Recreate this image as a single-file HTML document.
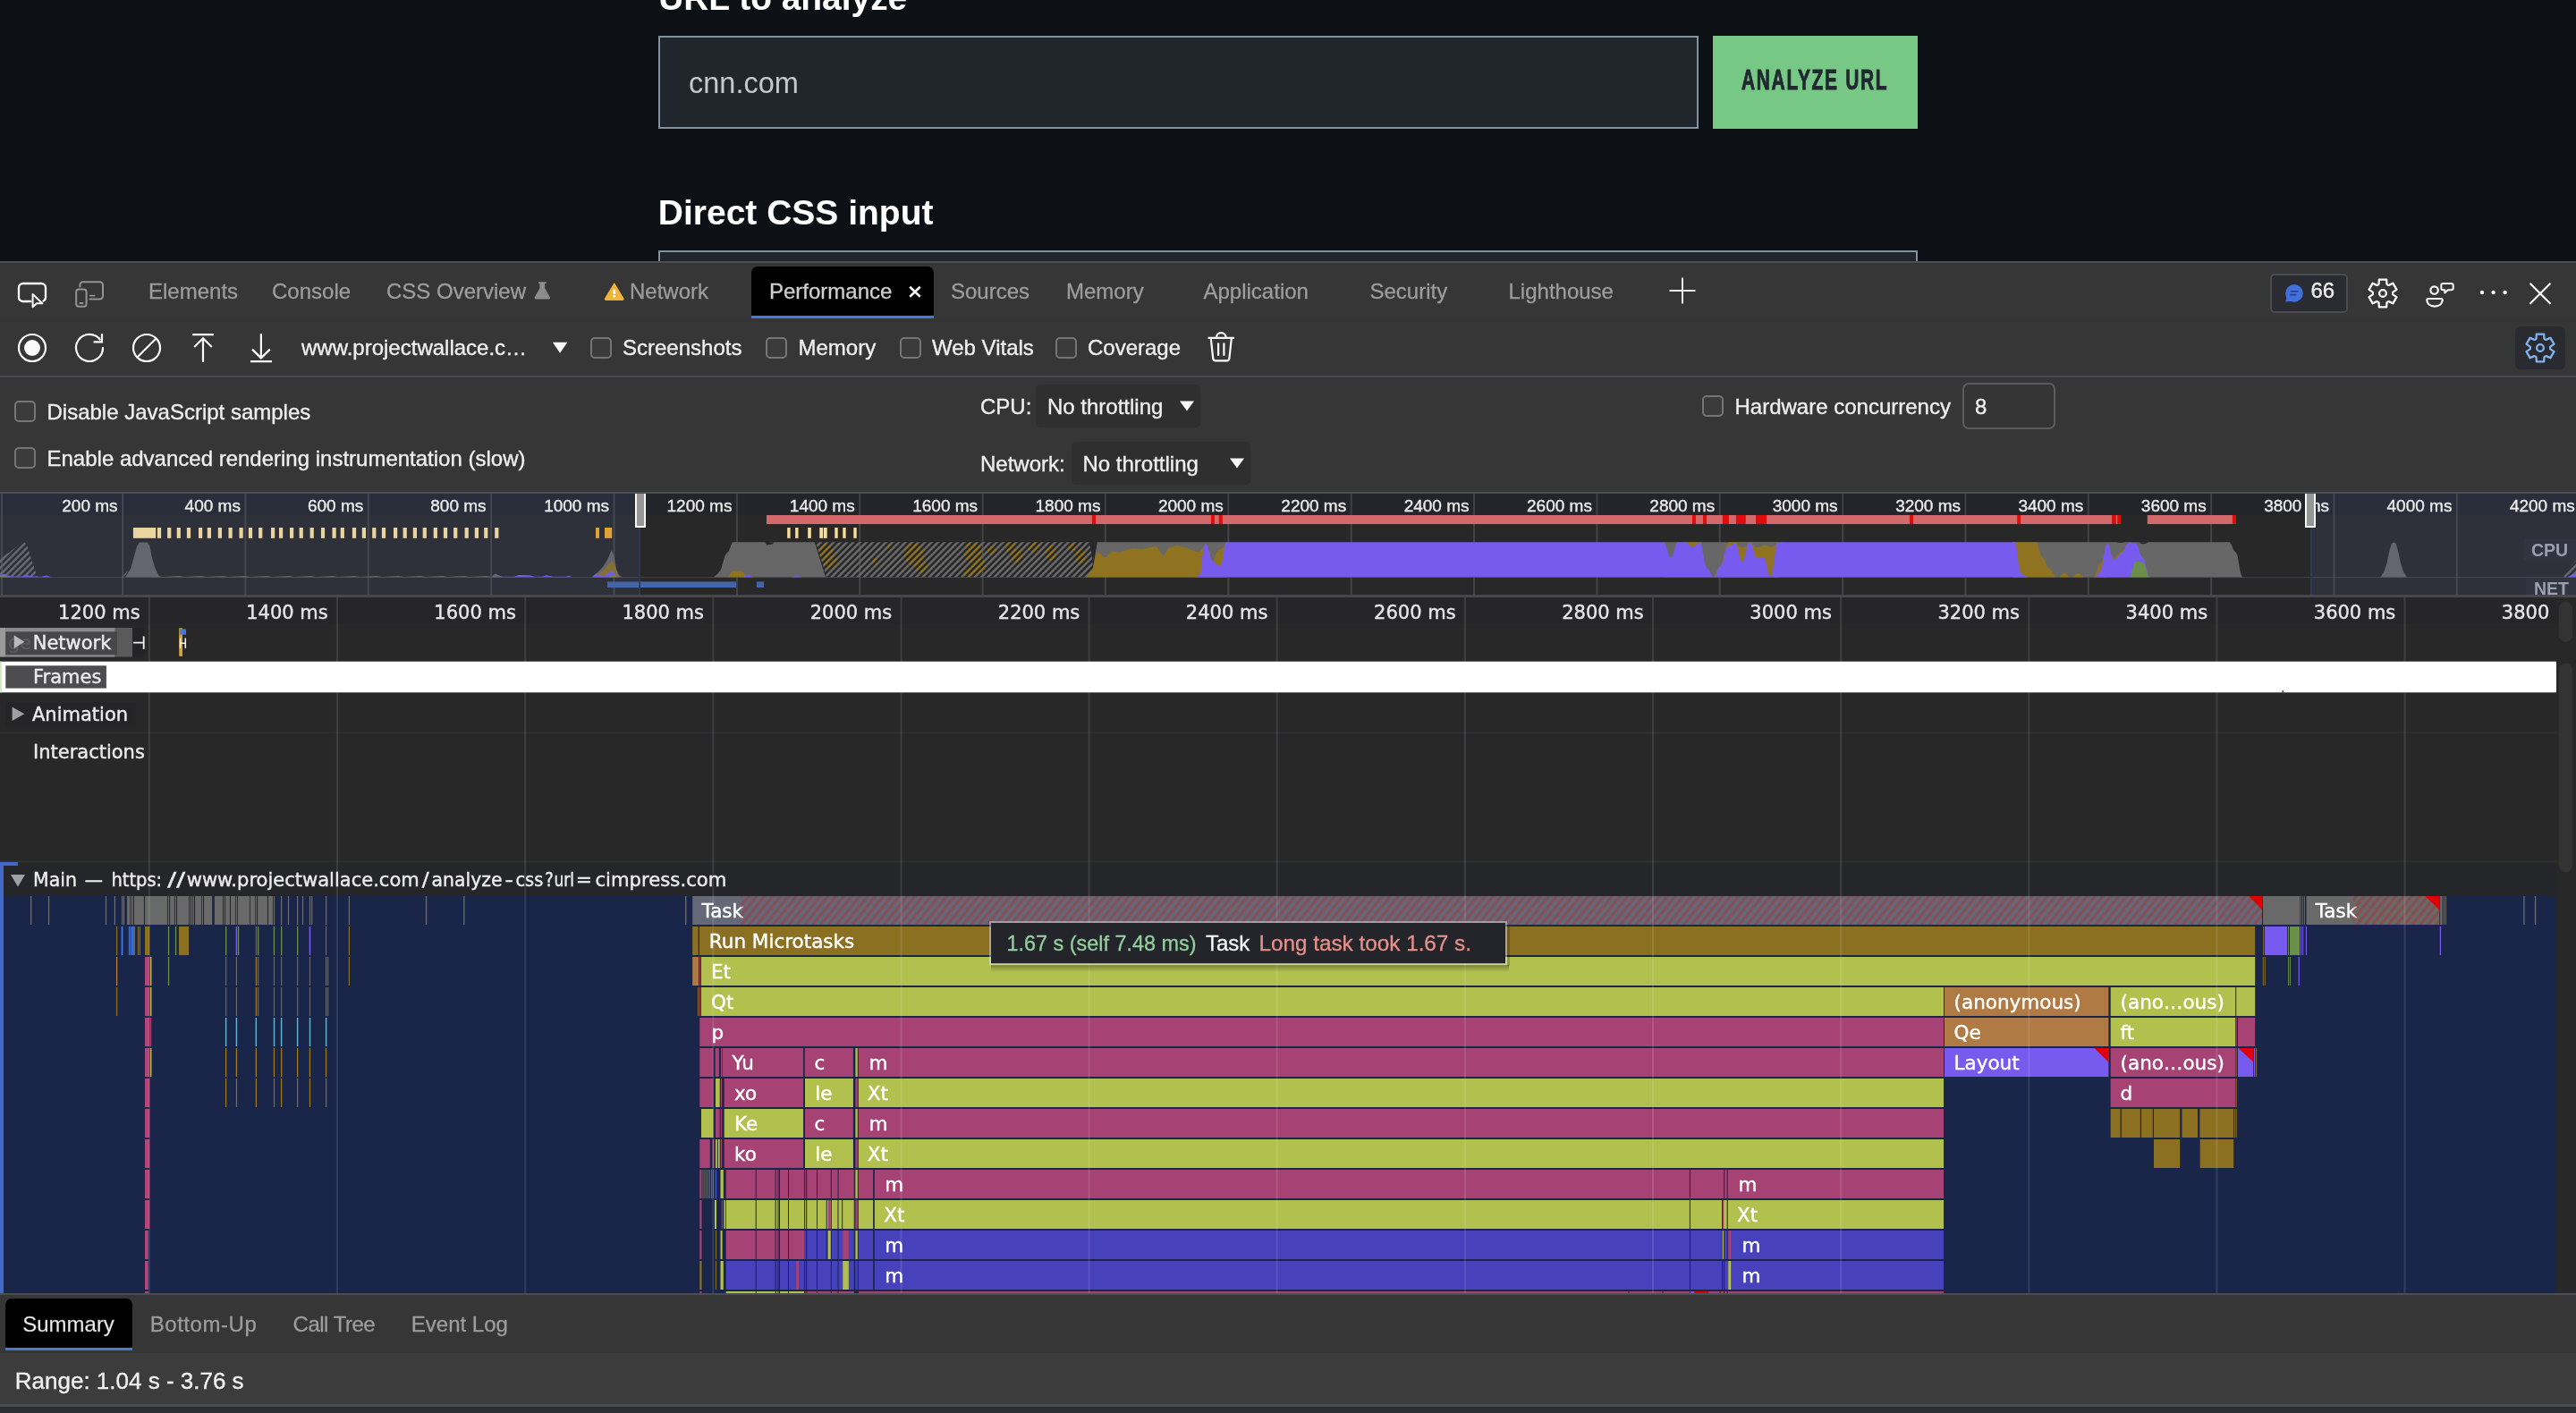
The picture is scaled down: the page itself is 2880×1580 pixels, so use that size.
<!DOCTYPE html><html><head><meta charset="utf-8"><title>DevTools Performance</title><style>
*{box-sizing:border-box;margin:0;padding:0}
html,body{width:2880px;height:1580px;overflow:hidden;background:#0d1116}
body{position:relative;will-change:transform;font-family:"Liberation Sans",sans-serif;color:#fff}
.a{position:absolute}
.t{position:absolute;white-space:nowrap;line-height:1}
.ui{font-size:24px;color:#efefef;-webkit-text-stroke:0.35px #efefef}
.tab{font-size:24px;color:#9d9d9d;-webkit-text-stroke:0.3px #9d9d9d}
.cb{position:absolute;width:24px;height:23.5px;border:2px solid #757575;border-radius:5px;background:#3b3b3b}
svg{position:absolute;overflow:visible}
.fl{font-family:"DejaVu Sans",sans-serif;font-size:21px;color:#fff;fill:currentColor;stroke:currentColor;stroke-width:.4px;paint-order:stroke}
.flb{font-size:21.5px}
</style></head><body>
<div class="a" style="left:0;top:0;width:2880px;height:292px;background:#0d1116;overflow:hidden">
<div class="t " style="left:736.2px;top:-21.5px;font-size:38.9px;font-weight:bold;color:#fff">URL to analyze</div>
<div class="a" style="left:736px;top:40px;width:1163px;height:104px;background:#21262d;border:2px solid #8291a0"></div>
<div class="t " style="left:770px;top:76.5px;font-size:32.5px;color:#c5c9cd">cnn.com</div>
<div class="a" style="left:1915px;top:40px;width:229px;height:104px;background:#77c885"></div>
<div class="t" style="left:1947px;top:74px;font-size:31px;font-weight:bold;color:#212830;-webkit-text-stroke:0.9px #212830;letter-spacing:2.5px;transform-origin:0 0;transform:scaleX(0.675)">ANALYZE URL</div>
<div class="t " style="left:735.8px;top:218.4px;font-size:39px;font-weight:bold;color:#fff">Direct CSS input</div>
<div class="a" style="left:736px;top:280px;width:1408px;height:40px;background:#21262d;border:2px solid #8291a0"></div>
</div>
<div class="a" style="left:0px;top:292px;width:2880px;height:1288px;background:#363636;"></div>
<div class="a" style="left:0px;top:292px;width:2880px;height:2px;background:#4d4e53;"></div>
<div class="a" style="left:0px;top:294px;width:2880px;height:64px;background:#363636;"></div>
<div class="a" style="left:0px;top:358px;width:2880px;height:2px;background:#333333;"></div>
<div class="a" style="left:0px;top:360px;width:2880px;height:60px;background:#363636;"></div>
<div class="a" style="left:0px;top:420px;width:2880px;height:2px;background:#494a50;"></div>
<div class="a" style="left:0px;top:422px;width:2880px;height:129px;background:#363636;"></div>
<div class="a" style="left:1158px;top:430px;width:184px;height:48px;background:#2f2f30;border-radius:5px"></div>
<div class="a" style="left:1198px;top:494px;width:200px;height:48px;background:#2f2f30;border-radius:5px"></div>
<div class="t tab" style="left:166px;top:314.0px;font-size:24px;">Elements</div>
<div class="t tab" style="left:304px;top:314.0px;font-size:24px;">Console</div>
<div class="t tab" style="left:432px;top:314.0px;font-size:24px;">CSS Overview</div>
<div class="t tab" style="left:704px;top:314.0px;font-size:24px;">Network</div>
<div class="a" style="left:840px;top:298px;width:204px;height:57.6px;background:#000;border-radius:7px 7px 0 0;border-bottom:3px solid #4a78d6"></div>
<div class="t tab" style="left:860px;top:314.0px;font-size:24px;color:#cfcfcf;-webkit-text-stroke:0.3px #cfcfcf">Performance</div>
<div class="t tab" style="left:1063px;top:314.0px;font-size:24px;">Sources</div>
<div class="t tab" style="left:1192px;top:314.0px;font-size:24px;">Memory</div>
<div class="t tab" style="left:1345.5px;top:314.0px;font-size:24px;">Application</div>
<div class="t tab" style="left:1531.5px;top:314.0px;font-size:24px;">Security</div>
<div class="t tab" style="left:1686.5px;top:314.0px;font-size:24px;">Lighthouse</div>
<div class="a" style="left:2538px;top:306px;width:87px;height:44px;background:#2b2c31;border:2px solid #4c4c50;border-radius:5px"></div>
<div class="t ui" style="left:2583.5px;top:312.9px;font-size:24px;color:#ececec">66</div>
<svg class="a" style="left:0;top:0" width="2880" height="460" viewBox="0 0 2880 460">
<path d="M34.5,337 H25.500 a4.500,4.500 0 0 1 -4.500,-4.500 V321.500 a4.500,4.500 0 0 1 4.500,-4.500 H46.500 a4.500,4.500 0 0 1 4.500,4.500 V332.500 a4.500,4.500 0 0 1 -2.500,4" fill="none" stroke="#fafafa" stroke-width="2.3" stroke-linecap="round"/>
<path d="M36.6,329 V343.300 L41,339.300 H47.300 Z" fill="#363636" stroke="#fafafa" stroke-width="2" stroke-linejoin="round"/>
<path d="M89.4,320.500 V318.800 a3.500,3.500 0 0 1 3.500,-3.500 H111.500 a3.500,3.500 0 0 1 3.500,3.500 V331 a3.500,3.500 0 0 1 -3.500,3.500 H100.500" fill="none" stroke="#949494" stroke-width="2" stroke-linecap="round"/>
<rect x="85.2" y="323.5" width="11.400" height="19.300" rx="3" fill="#363636" stroke="#949494" stroke-width="2"/>
<path d="M89.3,339 H92.600 M100.800,330.600 H105.600" stroke="#949494" stroke-width="1.8" stroke-linecap="round"/>
<path d="M602,315.300 h8.600 v1.800 h-1.400 v5.200 l5.600,9.900 a1.500,1.500 0 0 1 -1.300,2.300 h-14.400 a1.500,1.500 0 0 1 -1.300,-2.300 l5.600,-9.900 v-5.200 h-1.400 z" fill="#8c8c8c"/>
<path d="M686.8,317.3 L696.7,334 a.8,.8 0 0 1 -.7,1.2 H677.5 a.8,.8 0 0 1 -.7,-1.2 Z" fill="#f0b43c" stroke="#f0b43c" stroke-width="1.6" stroke-linejoin="round"/>
<rect x="685.5" y="323.8" width="2.700" height="5" fill="#fff"/><rect x="685.5" y="330" width="2.700" height="2.400" fill="#fff"/>
<path d="M1017.2,320.800 L1028.700,331.800 M1028.700,320.800 L1017.200,331.800" stroke="#f4f4f4" stroke-width="2.6"/>
<path d="M1866.5,325 H1895.5 M1881,310.5 V339.5" stroke="#f0f0f0" stroke-width="2"/>
<circle cx="2565" cy="327.900" r="9.800" fill="#4070dc"/><path d="M2556.800,331.500 L2555.200,337.600 L2562.500,336.800 Z" fill="#4070dc"/>
<path d="M2561,325.800 H2569 M2561,329.600 H2566.800" stroke="#263f86" stroke-width="1.600" stroke-linecap="round"/>
<path d="M2659.55,317.51 L2659.86,312.55 L2668.14,312.55 L2668.45,317.51 Q2669.30,318.82 2670.86,318.90 L2670.86,318.90 L2675.31,316.69 L2679.45,323.86 L2675.32,326.61 Q2674.60,328.00 2675.32,329.39 L2675.32,329.39 L2679.45,332.14 L2675.31,339.31 L2670.86,337.10 Q2669.30,337.18 2668.45,338.49 L2668.45,338.49 L2668.14,343.45 L2659.86,343.45 L2659.55,338.49 Q2658.70,337.18 2657.14,337.10 L2657.14,337.10 L2652.69,339.31 L2648.55,332.14 L2652.68,329.39 Q2653.40,328.00 2652.68,326.61 L2652.68,326.61 L2648.55,323.86 L2652.69,316.69 L2657.14,318.90 Q2658.70,318.82 2659.55,317.51 Z" fill="none" stroke="#fafafa" stroke-width="2.3" stroke-linejoin="round"/><circle cx="2664" cy="328" r="3.9" fill="none" stroke="#fafafa" stroke-width="2.3"/>
<circle cx="2721.6" cy="324.600" r="4.200" fill="none" stroke="#fafafa" stroke-width="2.200"/>
<path d="M2714.800,334 H2729.200 a1.500,1.500 0 0 1 1.500,1.600 c-.3,4.400 -3.800,7 -8.700,7 c-4.900,0 -8.400,-2.600 -8.700,-7 a1.500,1.500 0 0 1 1.500,-1.600 z" fill="none" stroke="#fafafa" stroke-width="2.200" stroke-linejoin="round"/>
<path d="M2731.600,316.900 H2740.400 a2.300,2.300 0 0 1 2.300,2.300 V322 a2.300,2.300 0 0 1 -2.300,2.300 H2736.800 L2733.300,327.400 V324.300 H2731.600 a2.300,2.300 0 0 1 -2.300,-2.300 V319.200 a2.300,2.300 0 0 1 2.300,-2.300 z" fill="#363636" stroke="#fafafa" stroke-width="2" stroke-linejoin="round"/>
<circle cx="2775" cy="327" r="2.2" fill="#fafafa"/>
<circle cx="2787.6" cy="327" r="2.2" fill="#fafafa"/>
<circle cx="2800.6" cy="327" r="2.2" fill="#fafafa"/>
<path d="M2828.5,316.700 L2851.500,339.700 M2851.500,316.700 L2828.500,339.700" stroke="#fafafa" stroke-width="2.2"/>
<circle cx="36" cy="389" r="15" fill="none" stroke="#fafafa" stroke-width="2.2"/><circle cx="36" cy="389" r="9" fill="#fafafa"/>
<path d="M112.300,380.300 A15,15 0 1 0 115,388" fill="none" stroke="#fafafa" stroke-width="2.2"/>
<path d="M104.600,382.400 H114 V373" fill="none" stroke="#fafafa" stroke-width="2.2"/>
<circle cx="164" cy="389" r="15" fill="none" stroke="#fafafa" stroke-width="2.2"/><path d="M153.500,399.500 L174.500,378.500" stroke="#fafafa" stroke-width="2.2"/>
<path d="M215.200,374.200 H239 M227,378.400 V405 M217.200,388 L227,378.200 L236.800,388" fill="none" stroke="#fafafa" stroke-width="2.2"/>
<path d="M280,404.200 H304 M291.900,373 V400 M282,390.600 L291.900,400.400 L301.800,390.600" fill="none" stroke="#fafafa" stroke-width="2.2"/>
<path d="M617.800,382.800 H634.400 L626.100,394.800 Z" fill="#fafafa"/>
<path d="M1350.500,377.800 H1380 M1360.100,377.300 a5.200,5.200 0 0 1 10.400,0 M1353.800,378.500 L1356.200,400.600 a3,3 0 0 0 3,2.700 H1371.400 a3,3 0 0 0 3,-2.700 L1376.800,378.500 M1362.100,383.500 V397.700 M1368.400,383.500 V397.700" fill="none" stroke="#fafafa" stroke-width="2.2"/>
<rect x="2812" y="365" width="56" height="48" rx="6" fill="#2a2b30"/>
<path d="M2835.55,378.51 L2835.86,373.55 L2844.14,373.55 L2844.45,378.51 Q2845.30,379.82 2846.86,379.90 L2846.86,379.90 L2851.31,377.69 L2855.45,384.86 L2851.32,387.61 Q2850.60,389.00 2851.32,390.39 L2851.32,390.39 L2855.45,393.14 L2851.31,400.31 L2846.86,398.10 Q2845.30,398.18 2844.45,399.49 L2844.45,399.49 L2844.14,404.45 L2835.86,404.45 L2835.55,399.49 Q2834.70,398.18 2833.14,398.10 L2833.14,398.10 L2828.69,400.31 L2824.55,393.14 L2828.68,390.39 Q2829.40,389.00 2828.68,387.61 L2828.68,387.61 L2824.55,384.86 L2828.69,377.69 L2833.14,379.90 Q2834.70,379.82 2835.55,378.51 Z" fill="none" stroke="#82b4f0" stroke-width="2.3" stroke-linejoin="round"/><circle cx="2840" cy="389" r="3.9" fill="none" stroke="#82b4f0" stroke-width="2.3"/>
<path d="M1319,448.500 H1335 L1327,459.500 Z" fill="#fafafa"/>
<path d="M1375,512.500 H1391 L1383,523.500 Z" fill="#fafafa"/>
</svg>
<div class="t ui" style="left:337px;top:377.1px;font-size:24px;">www.projectwallace.c…</div>
<div class="cb" style="left:660px;top:377px"></div>
<div class="t ui" style="left:696px;top:377.1px;font-size:24px;">Screenshots</div>
<div class="cb" style="left:856px;top:377px"></div>
<div class="t ui" style="left:892.5px;top:377.1px;font-size:24px;">Memory</div>
<div class="cb" style="left:1006px;top:377px"></div>
<div class="t ui" style="left:1042px;top:377.1px;font-size:24px;">Web Vitals</div>
<div class="cb" style="left:1180px;top:377px"></div>
<div class="t ui" style="left:1216px;top:377.1px;font-size:24px;">Coverage</div>
<div class="cb" style="left:16px;top:448px"></div>
<div class="t ui" style="left:52.5px;top:449.2px;font-size:24px;">Disable JavaScript samples</div>
<div class="cb" style="left:16px;top:500px"></div>
<div class="t ui" style="left:52.5px;top:500.7px;font-size:24px;">Enable advanced rendering instrumentation (slow)</div>
<div class="t ui" style="left:1096px;top:442.7px;font-size:24px;">CPU:</div>
<div class="t ui" style="left:1171px;top:442.7px;font-size:24px;">No throttling</div>
<div class="t ui" style="left:1096px;top:506.7px;font-size:24px;">Network:</div>
<div class="t ui" style="left:1210.5px;top:506.7px;font-size:24px;">No throttling</div>
<div class="cb" style="left:1903px;top:442px"></div>
<div class="t ui" style="left:1939.5px;top:442.7px;font-size:24px;">Hardware concurrency</div>
<div class="a" style="left:2194px;top:428px;width:104px;height:52px;background:#353535;border:2px solid #5c5c5c;border-radius:7px"></div>
<div class="t ui" style="left:2208px;top:442.7px;font-size:24px;">8</div>
<div class="a" style="left:0px;top:551px;width:2880px;height:117px;background:#282828;"></div>
<div class="a" style="left:0px;top:552px;width:2880px;height:23.6px;background:#24252a;"></div>
<svg class="a" style="left:0;top:0" width="2880" height="700" viewBox="0 0 2880 700">
<defs><pattern id="hg" width="5.15" height="5.15" patternUnits="userSpaceOnUse" patternTransform="rotate(-45)"><rect width="5.15" height="2.5" fill="#696969"/></pattern><pattern id="hy" width="5.15" height="5.15" patternUnits="userSpaceOnUse" patternTransform="rotate(-45)"><rect width="5.15" height="5.15" fill="#282828"/><rect width="5.15" height="2.5" fill="#8f7320"/></pattern></defs>
<rect x="136.1" y="552" width="2" height="114" fill="#fff" opacity=".13"/>
<rect x="273.4" y="552" width="2" height="114" fill="#fff" opacity=".13"/>
<rect x="410.8" y="552" width="2" height="114" fill="#fff" opacity=".13"/>
<rect x="548.1" y="552" width="2" height="114" fill="#fff" opacity=".13"/>
<rect x="685.5" y="552" width="2" height="114" fill="#fff" opacity=".13"/>
<rect x="822.9" y="552" width="2" height="114" fill="#fff" opacity=".13"/>
<rect x="960.2" y="552" width="2" height="114" fill="#fff" opacity=".13"/>
<rect x="1097.6" y="552" width="2" height="114" fill="#fff" opacity=".13"/>
<rect x="1234.9" y="552" width="2" height="114" fill="#fff" opacity=".13"/>
<rect x="1372.3" y="552" width="2" height="114" fill="#fff" opacity=".13"/>
<rect x="1509.7" y="552" width="2" height="114" fill="#fff" opacity=".13"/>
<rect x="1647.0" y="552" width="2" height="114" fill="#fff" opacity=".13"/>
<rect x="1784.4" y="552" width="2" height="114" fill="#fff" opacity=".13"/>
<rect x="1921.7" y="552" width="2" height="114" fill="#fff" opacity=".13"/>
<rect x="2059.1" y="552" width="2" height="114" fill="#fff" opacity=".13"/>
<rect x="2196.5" y="552" width="2" height="114" fill="#fff" opacity=".13"/>
<rect x="2333.8" y="552" width="2" height="114" fill="#fff" opacity=".13"/>
<rect x="2471.2" y="552" width="2" height="114" fill="#fff" opacity=".13"/>
<rect x="2608.5" y="552" width="2" height="114" fill="#fff" opacity=".13"/>
<rect x="2745.9" y="552" width="2" height="114" fill="#fff" opacity=".13"/>
<rect x="2883.3" y="552" width="2" height="114" fill="#fff" opacity=".13"/>
<rect x="1" y="552" width="2" height="114" fill="#fff" opacity=".13"/>
<rect x="857" y="576" width="1514.1" height="10" fill="#d4696b"/>
<rect x="2400.8" y="576" width="99.2" height="10" fill="#d4696b"/>
<rect x="1220.9" y="576" width="4.1" height="10" fill="#e00c0c"/>
<rect x="1354" y="576" width="3.9" height="10" fill="#e00c0c"/>
<rect x="1362.8" y="576" width="4.0" height="10" fill="#e00c0c"/>
<rect x="1892" y="576" width="3.9" height="10" fill="#e00c0c"/>
<rect x="1904" y="576" width="4.0" height="10" fill="#e00c0c"/>
<rect x="1925.9" y="576" width="7.0" height="10" fill="#e00c0c"/>
<rect x="1940.9" y="576" width="10.9" height="10" fill="#e00c0c"/>
<rect x="1963" y="576" width="12.1" height="10" fill="#e00c0c"/>
<rect x="2134.9" y="576" width="4.1" height="10" fill="#e00c0c"/>
<rect x="2255.2" y="576" width="3.9" height="10" fill="#e00c0c"/>
<rect x="2361.1" y="576" width="4.7" height="10" fill="#e00c0c"/>
<rect x="2367.2" y="576" width="3.9" height="10" fill="#e00c0c"/>
<rect x="2495.9" y="576" width="4.1" height="10" fill="#e00c0c"/>
<rect x="880.2" y="590" width="3.4" height="11.8" fill="#fbdf96"/>
<rect x="889.2" y="590" width="3.3" height="11.8" fill="#fbdf96"/>
<rect x="903.2" y="590" width="3.6" height="11.8" fill="#fbdf96"/>
<rect x="916.3" y="590" width="3.7" height="11.8" fill="#fbdf96"/>
<rect x="920.8" y="590" width="3.9" height="11.8" fill="#fbdf96"/>
<rect x="933.3" y="590" width="3.4" height="11.8" fill="#fbdf96"/>
<rect x="942.3" y="590" width="3.3" height="11.8" fill="#fbdf96"/>
<rect x="954.3" y="590" width="3.4" height="11.8" fill="#fbdf96"/>
<path d="M0.0,645.6 L0.0,624.0 L10.0,618.0 L20.0,610.0 L28.0,606.5 L31.0,612.0 L36.0,628.0 L42.0,645.6Z" fill="url(#hg)" />
<path d="M0.0,645.6 L0.0,643.0 L4.0,641.5 L9.0,643.5 L14.0,644.5 L24.0,644.5 L30.0,643.0 L36.0,644.5 L46.0,644.8 L52.0,643.5 L58.0,645.6Z" fill="#775bee" />
<path d="M0.0,645.6 L0.0,644.0 L4.0,643.0 L8.0,644.5 L12.0,645.6Z" fill="#6a8f4a" />
<path d="M136.0,645.6 L141.0,640.0 L143.0,637.0 L140.0,645.6Z" fill="url(#hg)" />
<path d="M140.0,645.6 L146.0,636.0 L150.0,622.0 L153.0,611.0 L156.0,606.5 L165.0,606.5 L167.5,611.0 L170.0,624.0 L173.0,634.0 L176.0,641.0 L179.0,645.6Z" fill="#676767" />
<path d="M168.0,645.6 L176.0,644.0 L182.0,644.9 L200.5,644.0 L206.5,644.9 L225.0,644.0 L231.0,644.9 L249.5,644.0 L255.5,644.9 L274.0,644.0 L280.0,644.9 L298.5,644.0 L304.5,644.9 L323.0,644.0 L329.0,644.9 L347.5,644.0 L353.5,644.9 L372.0,644.0 L378.0,644.9 L396.5,644.0 L402.5,644.9 L421.0,644.0 L427.0,644.9 L445.5,644.0 L451.5,644.9 L470.0,644.0 L476.0,644.9 L494.5,644.0 L500.5,644.9 L519.0,644.0 L525.0,644.9 L543.5,644.0 L549.5,644.9 L548.0,645.6Z" fill="#6b6a55" />
<path d="M549.0,645.6 L553.0,642.0 L557.0,643.5 L562.0,644.8 L575.0,644.8 L580.0,643.0 L592.0,643.2 L598.0,644.8 L606.0,644.8 L611.0,643.3 L618.0,644.8 L633.0,644.8 L636.0,643.7 L640.0,645.6Z" fill="#775bee" />
<path d="M549.0,645.6 L552.0,643.0 L554.0,641.5 L557.0,643.0 L560.0,645.6Z" fill="#676767" />
<path d="M661.0,645.6 L668.0,640.0 L674.0,634.0 L679.0,626.0 L683.8,615.0 L686.5,622.0 L689.0,636.0 L692.0,643.0 L696.0,645.6Z" fill="#676767" />
<path d="M664.0,645.6 L670.0,641.0 L676.0,636.0 L681.0,630.0 L684.5,627.5 L687.5,632.0 L690.0,641.0 L693.0,645.6Z" fill="#8f7320" />
<path d="M662.0,645.6 L666.0,642.0 L670.0,644.0 L676.0,644.0 L681.0,640.0 L684.0,638.0 L687.0,641.0 L690.0,645.6Z" fill="#775bee" />
<path d="M680.0,645.6 L683.0,643.3 L687.0,643.3 L690.0,645.6Z" fill="#6a8f4a" />
<path d="M912.0,606.2 L1217.7,606.2 L1221.0,622.0 L1221.9,635.4 L1218.0,641.0 L1213.5,645.6 L924.0,645.6Z" fill="url(#hg)" />
<path d="M797.6,645.6 L802.0,642.0 L806.0,636.8 L808.3,629.0 L810.2,622.2 L812.5,618.5 L815.0,615.9 L816.8,611.0 L818.6,606.6 L820.0,606.2 L856.0,606.2 L858.0,608.5 L861.0,606.2 L910.8,606.2 L915.0,620.0 L922.0,642.4 L923.4,645.6Z" fill="#676767" />
<path d="M855.0,606.2 L865.5,606.2 L863.5,608.6 L857.5,609.6Z" fill="#282828" />
<path d="M813.7,645.6 L816.0,642.0 L818.6,638.4 L829.7,638.4 L832.0,641.5 L834.6,645.6Z" fill="#8f7320" />
<path d="M831.0,645.6 L834.0,643.4 L838.5,643.4 L841.6,645.6Z" fill="#775bee" />
<path d="M885.6,645.6 L889.0,644.2 L893.5,644.2 L896.8,645.6Z" fill="#775bee" />
<clipPath id="hc"><path d="M912,606.2 L1217.7,606.2 L1221,622 L1221.9,635.4 L1213.5,645.6 L924,645.6 Z"/></clipPath><g clip-path="url(#hc)">
<ellipse cx="922" cy="616" rx="9" ry="9" fill="url(#hy)"/>
<ellipse cx="928" cy="628" rx="8" ry="8" fill="url(#hy)"/>
<ellipse cx="1022" cy="620" rx="11" ry="13" fill="url(#hy)"/>
<ellipse cx="1030" cy="634" rx="7" ry="7" fill="url(#hy)"/>
<ellipse cx="1088" cy="618" rx="10" ry="12" fill="url(#hy)"/>
<ellipse cx="1094" cy="632" rx="8" ry="9" fill="url(#hy)"/>
<ellipse cx="1083" cy="640" rx="7" ry="5" fill="url(#hy)"/>
<ellipse cx="1108" cy="615" rx="5" ry="5" fill="url(#hy)"/>
<ellipse cx="1130" cy="612" rx="6" ry="6" fill="url(#hy)"/>
<ellipse cx="1137" cy="622" rx="7" ry="8" fill="url(#hy)"/>
<ellipse cx="1156" cy="612" rx="7" ry="6" fill="url(#hy)"/>
<ellipse cx="1175" cy="618" rx="6" ry="9" fill="url(#hy)"/>
<ellipse cx="1198" cy="611" rx="5" ry="5" fill="url(#hy)"/>
<ellipse cx="1208" cy="622" rx="6" ry="8" fill="url(#hy)"/>
<ellipse cx="978" cy="628" rx="3" ry="4" fill="url(#hy)"/>
<ellipse cx="994" cy="612" rx="3" ry="3" fill="url(#hy)"/>
</g>
<path d="M1226.8,606.2 L1372.0,606.2 L1372.0,645.6 L1213.5,645.6 L1221.9,635.4Z" fill="#676767" />
<path d="M1213.5,645.6 L1218.0,641.0 L1221.9,635.4 L1223.4,628.0 L1224.7,621.5 L1226.3,618.6 L1228.2,617.3 L1231.0,619.5 L1233.5,622.6 L1235.9,623.6 L1238.0,622.0 L1240.5,618.5 L1242.9,617.0 L1247.0,617.3 L1251.3,618.0 L1256.0,616.3 L1261.0,614.3 L1266.6,613.1 L1271.5,613.6 L1276.4,614.5 L1283.0,612.6 L1290.4,611.0 L1292.6,611.6 L1294.6,613.1 L1297.4,618.0 L1300.2,622.2 L1303.0,618.0 L1305.8,613.1 L1310.5,611.2 L1315.6,610.0 L1322.0,611.6 L1328.1,613.1 L1334.0,615.4 L1339.3,617.3 L1341.5,616.0 L1343.5,614.5 L1346.3,610.3 L1352.0,616.0 L1354.0,625.7 L1356.8,627.7 L1358.5,622.0 L1360.3,617.5 L1362.4,615.0 L1365.9,613.6 L1368.7,610.8 L1370.1,607.2 L1372.0,606.2 L1372.0,645.6Z" fill="#8f7320" />
<path d="M1860.0,606.2 L1993.0,606.2 L1993.0,645.6 L1860.0,645.6Z" fill="#676767" />
<path d="M1884.0,606.2 L1902.0,606.2 L1902.0,613.0 L1884.0,613.0Z" fill="#8f7320" />
<path d="M1916.5,645.6 L1921.0,635.4 L1923.8,633.3 L1927.3,621.5 L1930.1,610.3 L1932.2,606.8 L1934.0,606.2 L1957.0,606.2 L1957.0,645.6Z" fill="#8f7320" />
<path d="M1942.5,606.2 L1954.5,606.2 L1953.0,611.0 L1948.0,612.6 L1944.0,611.0Z" fill="#676767" />
<path d="M1957.0,606.2 L1988.0,606.2 L1988.0,645.6 L1957.0,645.6Z" fill="#8f7320" />
<path d="M1958.0,606.2 L1986.5,606.2 L1985.5,608.5 L1983.9,611.0 L1979.7,611.7 L1975.5,610.3 L1971.4,609.6 L1967.2,611.7 L1963.0,612.4 L1959.0,608.0Z" fill="#676767" />
<path d="M2250.0,606.2 L2492.7,606.2 L2494.8,608.9 L2496.9,614.5 L2500.4,618.7 L2501.8,622.2 L2503.9,635.4 L2506.0,643.8 L2507.4,645.6 L2250.0,645.6Z" fill="#676767" />
<path d="M2250.0,606.2 L2277.5,606.2 L2279.6,614.5 L2282.4,622.2 L2285.9,625.7 L2288.7,634.0 L2293.6,637.5 L2296.4,642.4 L2298.5,645.6 L2250.0,645.6Z" fill="#8f7320" />
<path d="M2302.7,645.6 L2306.2,641.0 L2308.3,640.3 L2311.0,642.4 L2313.8,645.6Z" fill="#8f7320" />
<path d="M2317.3,645.6 L2321.5,641.7 L2324.3,641.0 L2327.8,643.8 L2329.9,645.6Z" fill="#8f7320" />
<path d="M1335.1,645.6 L1339.0,644.6 L1342.1,642.4 L1343.2,634.0 L1344.2,624.3 L1345.2,616.0 L1346.3,610.3 L1347.2,608.4 L1348.1,607.8 L1349.2,609.0 L1351.2,614.5 L1352.6,620.0 L1354.0,625.7 L1355.4,627.0 L1356.8,627.7 L1359.2,629.7 L1361.7,631.9 L1363.1,632.7 L1364.5,632.9 L1365.6,630.5 L1366.6,627.0 L1367.6,620.5 L1368.7,613.1 L1369.8,609.0 L1370.8,606.2 L1861.0,606.2 L1864.5,615.9 L1866.6,622.2 L1867.9,623.6 L1870.0,621.5 L1872.4,613.1 L1874.9,606.2 L1885.4,606.2 L1888.2,609.6 L1891.7,611.7 L1895.2,610.3 L1898.7,607.5 L1900.8,606.2 L1901.5,606.4 L1903.6,615.9 L1905.7,629.8 L1908.5,635.4 L1911.3,638.2 L1914.1,644.5 L1916.2,645.5 L1918.3,643.8 L1921.0,635.4 L1923.8,632.6 L1925.9,629.8 L1928.0,618.7 L1930.1,613.1 L1932.2,611.7 L1936.4,608.9 L1939.2,606.8 L1941.3,607.5 L1944.1,618.7 L1946.2,626.4 L1947.9,629.1 L1949.7,626.4 L1951.8,617.3 L1953.9,608.9 L1955.3,606.2 L1957.4,606.2 L1959.5,611.7 L1961.6,620.1 L1963.0,623.6 L1972.8,624.3 L1974.8,629.8 L1976.9,641.0 L1979.5,645.5 L1981.1,642.4 L1983.2,629.8 L1985.3,613.1 L1986.7,606.8 L1992.3,606.2 L2253.1,606.2 L2255.2,615.9 L2256.6,629.8 L2258.6,639.6 L2262.1,642.4 L2266.3,645.6Z" fill="#775bee" />
<path d="M2341.1,645.6 L2344.6,638.2 L2346.0,632.6 L2348.8,629.8 L2350.9,625.7 L2352.5,620.0 L2354.0,645.6Z" fill="#8f7320" />
<path d="M2360.7,619.5 L2363.5,624.6 L2367.6,620.2 L2371.1,616.9 L2374.6,614.3 L2376.0,620.0 L2362.0,630.0Z" fill="#8f7320" />
<path d="M2341.8,645.6 L2346.0,641.0 L2349.5,636.8 L2351.6,624.3 L2353.7,611.7 L2356.2,606.4 L2358.6,611.7 L2360.7,621.5 L2363.5,626.4 L2367.6,622.2 L2371.1,618.7 L2374.6,615.9 L2376.7,610.3 L2380.2,606.4 L2387.9,607.5 L2390.7,611.7 L2392.8,620.1 L2394.9,622.9 L2397.7,625.7 L2399.8,635.4 L2401.9,643.8 L2403.3,645.6Z" fill="#775bee" />
<path d="M2380.9,645.6 L2383.7,638.2 L2385.8,629.8 L2387.9,627.7 L2397.0,629.1 L2399.1,635.4 L2401.2,642.4 L2402.6,645.6Z" fill="#6a8f4a" />
<path d="M2391.0,606.2 L2402.0,606.2 L2399.5,607.6 L2396.0,608.2 L2393.0,607.4Z" fill="#282828" />
<path d="M2366.0,606.2 L2376.0,606.2 L2374.0,606.8 L2370.0,607.0 L2367.5,606.7Z" fill="#282828" />
<path d="M2661.3,645.6 L2665.0,640.0 L2668.3,630.8 L2671.0,618.0 L2673.6,608.0 L2676.0,606.2 L2678.8,608.0 L2681.5,618.0 L2684.0,630.0 L2687.5,640.0 L2691.0,645.6Z" fill="#676767" />
<path d="M2866.0,645.6 L2872.0,636.0 L2880.0,626.0 L2880.0,645.6Z" fill="url(#hg)" />
<path d="M2870.0,645.6 L2875.0,643.0 L2880.0,641.0 L2880.0,645.6Z" fill="#775bee" />
<rect x="0" y="645.1" width="2880" height="1.1" fill="#55555c" opacity=".55"/>
<rect x="679" y="650.4" width="144" height="6.6" fill="#4265aa"/>
<rect x="845.9" y="650.4" width="8.2" height="6.6" fill="#4265aa"/>
<rect x="0" y="552" width="715.2" height="114" fill="#5064a0" opacity=".15"/>
<rect x="2584" y="552" width="296.0" height="114" fill="#5064a0" opacity=".15"/>
<rect x="714.2" y="590" width="1.8" height="76" fill="#2c385a"/>
<rect x="2583" y="590" width="2" height="76" fill="#2c385a"/>
<rect x="148.9" y="590" width="25.3" height="11.8" fill="#ecd49e"/>
<rect x="175.9" y="590" width="4.2" height="11.8" fill="#ecd49e"/>
<rect x="187.1" y="590" width="4.2" height="11.8" fill="#ecd49e"/>
<rect x="197.7" y="590" width="4.2" height="11.8" fill="#ecd49e"/>
<rect x="208.9" y="590" width="4.2" height="11.8" fill="#ecd49e"/>
<rect x="222.0" y="590" width="4.2" height="11.8" fill="#ecd49e"/>
<rect x="231.8" y="590" width="4.2" height="11.8" fill="#ecd49e"/>
<rect x="243.8" y="590" width="4.2" height="11.8" fill="#ecd49e"/>
<rect x="255.5" y="590" width="4.2" height="11.8" fill="#ecd49e"/>
<rect x="267.5" y="590" width="4.2" height="11.8" fill="#ecd49e"/>
<rect x="277.9" y="590" width="4.2" height="11.8" fill="#ecd49e"/>
<rect x="289.1" y="590" width="4.2" height="11.8" fill="#ecd49e"/>
<rect x="303.0" y="590" width="4.2" height="11.8" fill="#ecd49e"/>
<rect x="312.0" y="590" width="4.2" height="11.8" fill="#ecd49e"/>
<rect x="324.0" y="590" width="4.2" height="11.8" fill="#ecd49e"/>
<rect x="334.6" y="590" width="4.2" height="11.8" fill="#ecd49e"/>
<rect x="346.6" y="590" width="4.2" height="11.8" fill="#ecd49e"/>
<rect x="358.9" y="590" width="4.2" height="11.8" fill="#ecd49e"/>
<rect x="371.5" y="590" width="4.2" height="11.8" fill="#ecd49e"/>
<rect x="380.7" y="590" width="4.2" height="11.8" fill="#ecd49e"/>
<rect x="393.9" y="590" width="4.2" height="11.8" fill="#ecd49e"/>
<rect x="404.8" y="590" width="4.2" height="11.8" fill="#ecd49e"/>
<rect x="416.2" y="590" width="4.2" height="11.8" fill="#ecd49e"/>
<rect x="426.9" y="590" width="4.2" height="11.8" fill="#ecd49e"/>
<rect x="440.0" y="590" width="4.2" height="11.8" fill="#ecd49e"/>
<rect x="450.6" y="590" width="4.2" height="11.8" fill="#ecd49e"/>
<rect x="461.8" y="590" width="4.2" height="11.8" fill="#ecd49e"/>
<rect x="472.7" y="590" width="4.2" height="11.8" fill="#ecd49e"/>
<rect x="484.7" y="590" width="4.2" height="11.8" fill="#ecd49e"/>
<rect x="495.9" y="590" width="4.2" height="11.8" fill="#ecd49e"/>
<rect x="507.1" y="590" width="4.2" height="11.8" fill="#ecd49e"/>
<rect x="519.6" y="590" width="4.2" height="11.8" fill="#ecd49e"/>
<rect x="530.8" y="590" width="4.2" height="11.8" fill="#ecd49e"/>
<rect x="541.2" y="590" width="4.2" height="11.8" fill="#ecd49e"/>
<rect x="553.2" y="590" width="4.2" height="11.8" fill="#ecd49e"/>
<rect x="666" y="590" width="4" height="11.8" fill="#dfa336"/>
<rect x="676" y="590" width="8.2" height="11.8" fill="#dfa336"/>
<rect x="2822" y="603" width="58" height="23" fill="#353846" opacity=".6"/>
<rect x="2824" y="646.5" width="56" height="20" fill="#353846" opacity=".6"/>
<text x="2830" y="621.5" font-family="Liberation Sans, sans-serif" font-weight="bold" font-size="19.5" fill="#99a0b0">CPU</text>
<text x="2833" y="664.5" font-family="Liberation Sans, sans-serif" font-weight="bold" font-size="19.5" fill="#99a0b0">NET</text>
<text x="131.6" y="572" text-anchor="end" font-family="Liberation Sans, sans-serif" font-size="19" fill="#ececec" stroke="#ececec" stroke-width=".35">200 ms</text>
<text x="268.9" y="572" text-anchor="end" font-family="Liberation Sans, sans-serif" font-size="19" fill="#ececec" stroke="#ececec" stroke-width=".35">400 ms</text>
<text x="406.3" y="572" text-anchor="end" font-family="Liberation Sans, sans-serif" font-size="19" fill="#ececec" stroke="#ececec" stroke-width=".35">600 ms</text>
<text x="543.6" y="572" text-anchor="end" font-family="Liberation Sans, sans-serif" font-size="19" fill="#ececec" stroke="#ececec" stroke-width=".35">800 ms</text>
<text x="681.0" y="572" text-anchor="end" font-family="Liberation Sans, sans-serif" font-size="19" fill="#ececec" stroke="#ececec" stroke-width=".35">1000 ms</text>
<text x="818.4" y="572" text-anchor="end" font-family="Liberation Sans, sans-serif" font-size="19" fill="#ececec" stroke="#ececec" stroke-width=".35">1200 ms</text>
<text x="955.7" y="572" text-anchor="end" font-family="Liberation Sans, sans-serif" font-size="19" fill="#ececec" stroke="#ececec" stroke-width=".35">1400 ms</text>
<text x="1093.1" y="572" text-anchor="end" font-family="Liberation Sans, sans-serif" font-size="19" fill="#ececec" stroke="#ececec" stroke-width=".35">1600 ms</text>
<text x="1230.4" y="572" text-anchor="end" font-family="Liberation Sans, sans-serif" font-size="19" fill="#ececec" stroke="#ececec" stroke-width=".35">1800 ms</text>
<text x="1367.8" y="572" text-anchor="end" font-family="Liberation Sans, sans-serif" font-size="19" fill="#ececec" stroke="#ececec" stroke-width=".35">2000 ms</text>
<text x="1505.2" y="572" text-anchor="end" font-family="Liberation Sans, sans-serif" font-size="19" fill="#ececec" stroke="#ececec" stroke-width=".35">2200 ms</text>
<text x="1642.5" y="572" text-anchor="end" font-family="Liberation Sans, sans-serif" font-size="19" fill="#ececec" stroke="#ececec" stroke-width=".35">2400 ms</text>
<text x="1779.9" y="572" text-anchor="end" font-family="Liberation Sans, sans-serif" font-size="19" fill="#ececec" stroke="#ececec" stroke-width=".35">2600 ms</text>
<text x="1917.2" y="572" text-anchor="end" font-family="Liberation Sans, sans-serif" font-size="19" fill="#ececec" stroke="#ececec" stroke-width=".35">2800 ms</text>
<text x="2054.6" y="572" text-anchor="end" font-family="Liberation Sans, sans-serif" font-size="19" fill="#ececec" stroke="#ececec" stroke-width=".35">3000 ms</text>
<text x="2192.0" y="572" text-anchor="end" font-family="Liberation Sans, sans-serif" font-size="19" fill="#ececec" stroke="#ececec" stroke-width=".35">3200 ms</text>
<text x="2329.3" y="572" text-anchor="end" font-family="Liberation Sans, sans-serif" font-size="19" fill="#ececec" stroke="#ececec" stroke-width=".35">3400 ms</text>
<text x="2466.7" y="572" text-anchor="end" font-family="Liberation Sans, sans-serif" font-size="19" fill="#ececec" stroke="#ececec" stroke-width=".35">3600 ms</text>
<text x="2604.0" y="572" text-anchor="end" font-family="Liberation Sans, sans-serif" font-size="19" fill="#ececec" stroke="#ececec" stroke-width=".35">3800 ms</text>
<text x="2741.4" y="572" text-anchor="end" font-family="Liberation Sans, sans-serif" font-size="19" fill="#ececec" stroke="#ececec" stroke-width=".35">4000 ms</text>
<text x="2878.8" y="572" text-anchor="end" font-family="Liberation Sans, sans-serif" font-size="19" fill="#ececec" stroke="#ececec" stroke-width=".35">4200 ms</text>
<rect x="710.0" y="552" width="12" height="38" fill="#fff"/>
<rect x="711.9" y="552" width="8.2" height="36.1" fill="#969696"/>
<rect x="2577.0" y="552" width="12" height="38" fill="#fff"/>
<rect x="2578.9" y="552" width="8.2" height="36.1" fill="#969696"/>
</svg>
<div class="a" style="left:0px;top:550px;width:2880px;height:2px;background:#4c4d52;"></div>
<div class="a" style="left:0px;top:665px;width:2880px;height:3px;background:#48484c;"></div>
<div class="a" style="left:0px;top:668px;width:2880px;height:778px;background:#282828;"></div>
<div class="a" style="left:0px;top:668px;width:2880px;height:30px;background:#262628;"></div>
<svg class="a" style="left:0;top:0" width="2880" height="1580" viewBox="0 0 2880 1580">
<defs><pattern id="lt" width="6.88" height="6.88" patternUnits="userSpaceOnUse" patternTransform="rotate(-51)"><rect width="6.88" height="3.3" fill="#c81414" opacity=".3"/></pattern><clipPath id="fc"><rect x="0" y="668" width="2858" height="778"/></clipPath></defs>
<g clip-path="url(#fc)">
<rect x="0" y="702" width="148" height="32.5" fill="#5a5a5a"/>
<rect x="0" y="702" width="6.3" height="32.5" fill="#9a9a9a"/>
<rect x="6.3" y="702" width="122" height="4.5" fill="#8a8a8a"/>
<rect x="6.3" y="706.5" width="124.700" height="25.8" fill="#47474a"/>
<rect x="6.3" y="732.3" width="122" height="2.2" fill="#8a8a8a"/>
<rect x="148" y="702" width="14" height="32.5" fill="#242427"/>
<text x="9" y="725.5" class="fl" style="color:#5b5b5f">ge</text>
<path d="M15.7,710.3 L27.3,717.7 L15.7,725 Z" fill="#b9b9b9"/>
<text x="36.7" y="725.8" class="fl" style="color:#ececec">Network</text>
<path d="M149,718.700 H161 M160.700,711.5 V726" stroke="#f2f2f2" stroke-width="1.8" fill="none"/>
<rect x="200.2" y="702.3" width="3.8" height="31.500" fill="#d3a43b"/>
<rect x="201.2" y="703.4" width="6.8" height="6.3" fill="#4a76d8"/>
<path d="M201.500,713.500 V725 M207.300,713.500 V725 M201.500,719.300 H207.300" stroke="#f4f4f4" stroke-width="1.5" fill="none"/>
<rect x="0" y="818.500" width="2858" height="1.5" fill="#313135"/>
<rect x="0" y="962.500" width="2858" height="1.5" fill="#313135"/>
<rect x="6.3" y="785.8" width="145" height="25.600" fill="#252527"/>
<path d="M13.6,790.4 L27.3,798.2 L13.6,806 Z" fill="#9ea0a3"/>
<text x="36" y="806.1" class="fl" style="color:#ececec">Animation</text>
<text x="37" y="848" class="fl" style="color:#ececec">Interactions</text>
<rect x="0" y="968" width="2858" height="34" fill="#25262a"/>
<path d="M12,978 H28 L20,991.4 Z" fill="#9ea2a8"/>
<text y="991.4" class="fl" style="color:#ececec" xml:space="preserve"><tspan x="37" textLength="49" lengthAdjust="spacingAndGlyphs">Main</tspan><tspan x="88.2" textLength="33.2" lengthAdjust="spacingAndGlyphs"> — </tspan><tspan x="124.4" textLength="56.7" lengthAdjust="spacingAndGlyphs">https:</tspan><tspan x="187.3" textLength="19.7" lengthAdjust="spacingAndGlyphs">//</tspan><tspan x="208.7" textLength="260.1" lengthAdjust="spacingAndGlyphs">www.projectwallace.com</tspan><tspan x="471.8" textLength="8" lengthAdjust="spacingAndGlyphs">/</tspan><tspan x="482.6" textLength="79" lengthAdjust="spacingAndGlyphs">analyze</tspan><tspan x="564.5" textLength="9.4" lengthAdjust="spacingAndGlyphs">-</tspan><tspan x="576.4" textLength="30.9" lengthAdjust="spacingAndGlyphs">css</tspan><tspan x="609.3" textLength="9.6" lengthAdjust="spacingAndGlyphs">?</tspan><tspan x="619.4" textLength="22.6" lengthAdjust="spacingAndGlyphs">url</tspan><tspan x="643.7" textLength="18.3" lengthAdjust="spacingAndGlyphs">=</tspan><tspan x="665.4" textLength="147" lengthAdjust="spacingAndGlyphs">cimpress.com</tspan></text>
<rect x="0" y="1002" width="2858" height="444" fill="#19264a"/>
<rect x="34.0" y="1002" width="1.3" height="32" fill="#6a6c76"/>
<rect x="53.9" y="1002" width="1.3" height="32" fill="#6a6c76"/>
<rect x="475.9" y="1002" width="1.3" height="32" fill="#6a6c76"/>
<rect x="518.2" y="1002" width="1.3" height="32" fill="#6a6c76"/>
<rect x="766.0" y="1002" width="1.3" height="32" fill="#6a6c76"/>
<rect x="117.9" y="1002" width="1.2" height="32" fill="#6a6c76"/>
<rect x="127.8" y="1002" width="1.2" height="32" fill="#6a6c76"/>
<rect x="136.0" y="1002" width="1.2" height="32" fill="#6a6c76"/>
<rect x="137.9" y="1002" width="1.2" height="32" fill="#6a6c76"/>
<rect x="314.0" y="1002" width="1.2" height="32" fill="#6a6c76"/>
<rect x="321.9" y="1002" width="1.2" height="32" fill="#6a6c76"/>
<rect x="332.0" y="1002" width="1.2" height="32" fill="#6a6c76"/>
<rect x="337.9" y="1002" width="1.2" height="32" fill="#6a6c76"/>
<rect x="345.9" y="1002" width="1.2" height="32" fill="#6a6c76"/>
<rect x="348.1" y="1002" width="1.2" height="32" fill="#6a6c76"/>
<rect x="364.0" y="1002" width="1.2" height="32" fill="#6a6c76"/>
<rect x="389.8" y="1002" width="1.2" height="32" fill="#6a6c76"/>
<rect x="142.04" y="1002" width="3.18" height="32" fill="#696969"/>
<rect x="145.86" y="1002" width="1.02" height="32" fill="#696969"/>
<rect x="147.52" y="1002" width="1.53" height="32" fill="#696969"/>
<rect x="150.06" y="1002" width="10.83" height="32" fill="#696969"/>
<rect x="162.04" y="1002" width="24.97" height="32" fill="#696969"/>
<rect x="187.90" y="1002" width="1.27" height="32" fill="#696969"/>
<rect x="190.19" y="1002" width="4.71" height="32" fill="#696969"/>
<rect x="195.80" y="1002" width="1.27" height="32" fill="#696969"/>
<rect x="198.09" y="1002" width="12.99" height="32" fill="#696969"/>
<rect x="211.85" y="1002" width="1.02" height="32" fill="#696969"/>
<rect x="213.76" y="1002" width="1.27" height="32" fill="#696969"/>
<rect x="215.67" y="1002" width="1.27" height="32" fill="#696969"/>
<rect x="218.09" y="1002" width="7.01" height="32" fill="#696969"/>
<rect x="225.86" y="1002" width="1.15" height="32" fill="#696969"/>
<rect x="228.03" y="1002" width="9.17" height="32" fill="#696969"/>
<rect x="239.87" y="1002" width="9.17" height="32" fill="#696969"/>
<rect x="249.94" y="1002" width="1.15" height="32" fill="#696969"/>
<rect x="251.97" y="1002" width="4.97" height="32" fill="#696969"/>
<rect x="257.96" y="1002" width="5.22" height="32" fill="#696969"/>
<rect x="263.95" y="1002" width="1.15" height="32" fill="#696969"/>
<rect x="265.99" y="1002" width="12.99" height="32" fill="#696969"/>
<rect x="279.87" y="1002" width="5.10" height="32" fill="#696969"/>
<rect x="285.73" y="1002" width="1.27" height="32" fill="#696969"/>
<rect x="288.03" y="1002" width="10.96" height="32" fill="#696969"/>
<rect x="300.00" y="1002" width="5.10" height="32" fill="#696969"/>
<rect x="305.99" y="1002" width="1.15" height="32" fill="#696969"/>
<rect x="130.0" y="1036" width="1.2" height="32" fill="#8c7021"/>
<rect x="135.7" y="1036" width="1.7" height="32" fill="#4a7be8"/>
<rect x="143.95" y="1036" width="0.89" height="32" fill="#5a8cf0"/>
<rect x="145.86" y="1036" width="1.02" height="32" fill="#5a8cf0"/>
<rect x="147.77" y="1036" width="1.66" height="32" fill="#5a8cf0"/>
<rect x="150.0" y="1036" width="1.0" height="32" fill="#6a6c76"/>
<rect x="153.9" y="1036" width="1.2" height="32" fill="#8c7021"/>
<rect x="155.9" y="1036" width="1.1" height="32" fill="#6a6c76"/>
<rect x="162.0" y="1036" width="5.1" height="32" fill="#8c7021"/>
<rect x="187.9" y="1036" width="1.3" height="32" fill="#6a8f4a"/>
<rect x="195.9" y="1036" width="1.3" height="32" fill="#6a8f4a"/>
<rect x="200.0" y="1036" width="11.1" height="32" fill="#8c7021"/>
<rect x="252.0" y="1036" width="1.3" height="32" fill="#6a8f4a"/>
<rect x="263.7" y="1036" width="1.5" height="32" fill="#775bee"/>
<rect x="266.0" y="1036" width="1.2" height="32" fill="#6a8f4a"/>
<rect x="285.8" y="1036" width="1.1" height="32" fill="#6a6c76"/>
<rect x="288.0" y="1036" width="1.3" height="32" fill="#6a8f4a"/>
<rect x="305.8" y="1036" width="1.3" height="32" fill="#6a8f4a"/>
<rect x="314.0" y="1036" width="1.3" height="32" fill="#6a8f4a"/>
<rect x="332.0" y="1036" width="1.3" height="32" fill="#6a8f4a"/>
<rect x="345.7" y="1036" width="1.5" height="32" fill="#775bee"/>
<rect x="364.0" y="1036" width="1.1" height="32" fill="#6a6c76"/>
<rect x="389.8" y="1036" width="1.2" height="32" fill="#8c7021"/>
<rect x="130.0" y="1070" width="1.2" height="32" fill="#c08040"/>
<rect x="162.0" y="1070" width="5.1" height="32" fill="#b0457a"/>
<rect x="168.1" y="1070" width="1.3" height="32" fill="#c8cc50"/>
<rect x="252.1" y="1070" width="1.1" height="32" fill="#6a6c76"/>
<rect x="263.9" y="1070" width="1.1" height="32" fill="#6a6c76"/>
<rect x="288.1" y="1070" width="1.1" height="32" fill="#6a6c76"/>
<rect x="305.9" y="1070" width="1.1" height="32" fill="#6a6c76"/>
<rect x="314.1" y="1070" width="1.1" height="32" fill="#6a6c76"/>
<rect x="332.1" y="1070" width="1.1" height="32" fill="#6a6c76"/>
<rect x="345.9" y="1070" width="1.1" height="32" fill="#6a6c76"/>
<rect x="364.0" y="1070" width="1.1" height="32" fill="#6a6c76"/>
<rect x="366.1" y="1070" width="1.1" height="32" fill="#6a6c76"/>
<rect x="285.8" y="1070" width="1.2" height="32" fill="#a07820"/>
<rect x="130.0" y="1104" width="1.2" height="32" fill="#8c7021"/>
<rect x="162.0" y="1104" width="5.1" height="32" fill="#b0457a"/>
<rect x="168.1" y="1104" width="1.3" height="32" fill="#c8cc50"/>
<rect x="252.1" y="1104" width="1.1" height="32" fill="#6a6c76"/>
<rect x="263.9" y="1104" width="1.1" height="32" fill="#6a6c76"/>
<rect x="288.1" y="1104" width="1.1" height="32" fill="#6a6c76"/>
<rect x="305.9" y="1104" width="1.1" height="32" fill="#6a6c76"/>
<rect x="314.1" y="1104" width="1.1" height="32" fill="#6a6c76"/>
<rect x="332.1" y="1104" width="1.1" height="32" fill="#6a6c76"/>
<rect x="345.9" y="1104" width="1.1" height="32" fill="#6a6c76"/>
<rect x="364.0" y="1104" width="1.1" height="32" fill="#6a6c76"/>
<rect x="366.1" y="1104" width="1.1" height="32" fill="#6a6c76"/>
<rect x="285.8" y="1104" width="1.2" height="32" fill="#a07820"/>
<rect x="187.9" y="1070" width="1.3" height="32" fill="#6a8f4a"/>
<rect x="389.8" y="1070" width="1.2" height="32" fill="#8c7021"/>
<rect x="251.9" y="1138" width="1.45" height="32" fill="#66b0d0"/>
<rect x="263.7" y="1138" width="1.45" height="32" fill="#66b0d0"/>
<rect x="285.6" y="1138" width="1.45" height="32" fill="#66b0d0"/>
<rect x="305.8" y="1138" width="1.45" height="32" fill="#66b0d0"/>
<rect x="313.9" y="1138" width="1.45" height="32" fill="#66b0d0"/>
<rect x="331.9" y="1138" width="1.45" height="32" fill="#66b0d0"/>
<rect x="345.8" y="1138" width="1.45" height="32" fill="#66b0d0"/>
<rect x="363.9" y="1138" width="1.45" height="32" fill="#66b0d0"/>
<rect x="252.0" y="1172" width="1.3" height="32" fill="#a07820"/>
<rect x="263.8" y="1172" width="1.3" height="32" fill="#a07820"/>
<rect x="285.7" y="1172" width="1.3" height="32" fill="#a07820"/>
<rect x="305.8" y="1172" width="1.3" height="32" fill="#a07820"/>
<rect x="314.0" y="1172" width="1.3" height="32" fill="#a07820"/>
<rect x="332.0" y="1172" width="1.3" height="32" fill="#a07820"/>
<rect x="345.8" y="1172" width="1.3" height="32" fill="#a07820"/>
<rect x="363.9" y="1172" width="1.3" height="32" fill="#a07820"/>
<rect x="252.0" y="1206" width="1.2" height="32" fill="#a07820"/>
<rect x="263.9" y="1206" width="1.2" height="32" fill="#6a6c76"/>
<rect x="285.8" y="1206" width="1.2" height="32" fill="#a07820"/>
<rect x="305.9" y="1206" width="1.2" height="32" fill="#6a6c76"/>
<rect x="314.0" y="1206" width="1.2" height="32" fill="#a07820"/>
<rect x="332.0" y="1206" width="1.2" height="32" fill="#6a6c76"/>
<rect x="345.9" y="1206" width="1.2" height="32" fill="#a07820"/>
<rect x="364.0" y="1206" width="1.2" height="32" fill="#6a6c76"/>
<rect x="162.0" y="1138" width="5.1" height="32" fill="#b0457a"/>
<rect x="162.0" y="1172" width="5.1" height="32" fill="#b0457a"/>
<rect x="162.0" y="1206" width="5.1" height="32" fill="#b0457a"/>
<rect x="162.0" y="1240" width="5.1" height="32" fill="#b0457a"/>
<rect x="162.0" y="1274" width="5.1" height="32" fill="#b0457a"/>
<rect x="162.0" y="1308" width="5.1" height="32" fill="#b0457a"/>
<rect x="162.0" y="1342" width="5.1" height="32" fill="#b0457a"/>
<rect x="162.0" y="1376" width="3.8" height="32" fill="#b0457a"/>
<rect x="162.0" y="1410" width="3.8" height="32" fill="#b0457a"/>
<rect x="168.1" y="1138" width="1.1" height="32" fill="#c04070"/>
<rect x="168.1" y="1172" width="1.3" height="32" fill="#c8cc50"/>
<rect x="162" y="1444" width="4" height="2" fill="#b0457a"/>
<rect x="774.2" y="1002" width="1754.8" height="32" fill="#656977"/>
<text x="784.6" y="1025.9" class="fl flb">Task</text>
<rect x="828" y="1002" width="1701" height="32" fill="url(#lt)"/>
<path d="M2514,1002 H2529 V1017 Z" fill="#e00000"/>
<rect x="774.2" y="1036" width="1747.0" height="32" fill="#8c7021"/>
<text x="792.8" y="1059.9" class="fl flb">Run Microtasks</text>
<rect x="780.7" y="1036" width="1.2" height="32" fill="#19264a"/>
<rect x="774.2" y="1070" width="6.8" height="32" fill="#b07a45"/>
<rect x="781.9" y="1070" width="1.2" height="32" fill="#a64374"/>
<rect x="784.0" y="1070" width="1737.2" height="32" fill="#b2c04e"/>
<text x="795.0" y="1093.9" class="fl flb">Et</text>
<rect x="780.0" y="1104" width="1.0" height="32" fill="#8c7021"/>
<rect x="781.9" y="1104" width="1.2" height="32" fill="#a64374"/>
<rect x="784.0" y="1104" width="1389.0" height="32" fill="#b2c04e"/>
<text x="795.0" y="1127.9" class="fl flb">Qt</text>
<rect x="782.3" y="1138" width="1390.7" height="32" fill="#a64374"/>
<text x="795.5" y="1161.9" class="fl flb">p</text>
<rect x="782.3" y="1172" width="15.2" height="32" fill="#a64374"/>
<rect x="799.7" y="1172" width="4.2" height="32" fill="#a64374"/>
<rect x="805.9" y="1172" width="1.2" height="32" fill="#a64374"/>
<rect x="807.6" y="1172" width="90.5" height="32" fill="#a64374"/>
<text x="818.5" y="1195.9" class="fl flb">Yu</text>
<rect x="899.8" y="1172" width="54.1" height="32" fill="#a64374"/>
<text x="910.5" y="1195.9" class="fl flb">c</text>
<rect x="956.4" y="1172" width="2.4" height="32" fill="#b2c04e"/>
<rect x="959.8" y="1172" width="1213.2" height="32" fill="#a64374"/>
<text x="971.4" y="1195.9" class="fl flb">m</text>
<rect x="782.3" y="1206" width="15.2" height="32" fill="#a64374"/>
<rect x="800.0" y="1206" width="4.7" height="32" fill="#b2c04e"/>
<rect x="805.9" y="1206" width="1.2" height="32" fill="#a64374"/>
<rect x="809.7" y="1206" width="88.4" height="32" fill="#a64374"/>
<text x="821.0" y="1229.9" class="fl flb">xo</text>
<rect x="900.0" y="1206" width="53.9" height="32" fill="#b2c04e"/>
<text x="911.3" y="1229.9" class="fl flb">le</text>
<rect x="956.4" y="1206" width="2.4" height="32" fill="#a64374"/>
<rect x="959.8" y="1206" width="1213.2" height="32" fill="#b2c04e"/>
<text x="969.8" y="1229.9" class="fl flb">Xt</text>
<rect x="784.0" y="1240" width="13.5" height="32" fill="#b2c04e"/>
<rect x="800.0" y="1240" width="4.7" height="32" fill="#a64374"/>
<rect x="805.9" y="1240" width="1.2" height="32" fill="#a64374"/>
<rect x="809.7" y="1240" width="88.4" height="32" fill="#b2c04e"/>
<text x="821.0" y="1263.9" class="fl flb">Ke</text>
<rect x="900.0" y="1240" width="53.9" height="32" fill="#a64374"/>
<text x="910.5" y="1263.9" class="fl flb">c</text>
<rect x="956.4" y="1240" width="2.4" height="32" fill="#b2c04e"/>
<rect x="959.8" y="1240" width="1213.2" height="32" fill="#a64374"/>
<text x="971.4" y="1263.9" class="fl flb">m</text>
<rect x="782.3" y="1274" width="11.5" height="32" fill="#a64374"/>
<rect x="796.5" y="1274" width="1.9" height="32" fill="#a64374"/>
<rect x="800.0" y="1274" width="1.8" height="32" fill="#b2c04e"/>
<rect x="802.8" y="1274" width="1.9" height="32" fill="#b2c04e"/>
<rect x="805.9" y="1274" width="1.2" height="32" fill="#a64374"/>
<rect x="809.7" y="1274" width="88.4" height="32" fill="#a64374"/>
<text x="821.0" y="1297.9" class="fl flb">ko</text>
<rect x="900.0" y="1274" width="53.9" height="32" fill="#b2c04e"/>
<text x="911.3" y="1297.9" class="fl flb">le</text>
<rect x="956.4" y="1274" width="2.4" height="32" fill="#a64374"/>
<rect x="959.8" y="1274" width="1213.2" height="32" fill="#b2c04e"/>
<text x="969.8" y="1297.9" class="fl flb">Xt</text>
<rect x="782.3" y="1308" width="2.2" height="32" fill="#a64374"/>
<rect x="785.5" y="1308" width="0.9" height="32" fill="#8c7021"/>
<rect x="787.4" y="1308" width="0.9" height="32" fill="#8c7021"/>
<rect x="789.3" y="1308" width="0.9" height="32" fill="#8c7021"/>
<rect x="791.2" y="1308" width="0.9" height="32" fill="#8c7021"/>
<rect x="793.1" y="1308" width="0.9" height="32" fill="#8c7021"/>
<rect x="795.0" y="1308" width="0.9" height="32" fill="#8c7021"/>
<rect x="796.9" y="1308" width="0.9" height="32" fill="#8c7021"/>
<rect x="799.9" y="1308" width="1.2" height="32" fill="#4a5bd8"/>
<rect x="805.5" y="1308" width="3.3" height="32" fill="#b2c04e"/>
<rect x="811.7" y="1308" width="143.9" height="32" fill="#a64374"/>
<rect x="844.7" y="1308" width="1.0" height="32" fill="#19264a"/>
<rect x="866.6" y="1308" width="1.0" height="32" fill="#19264a"/>
<rect x="869.5" y="1308" width="1.0" height="32" fill="#19264a"/>
<rect x="871.0" y="1308" width="1.0" height="32" fill="#19264a"/>
<rect x="881.0" y="1308" width="1.0" height="32" fill="#19264a"/>
<rect x="899.1" y="1308" width="1.0" height="32" fill="#19264a"/>
<rect x="901.2" y="1308" width="1.0" height="32" fill="#19264a"/>
<rect x="913.0" y="1308" width="1.0" height="32" fill="#19264a"/>
<rect x="928.8" y="1308" width="1.0" height="32" fill="#19264a"/>
<rect x="936.5" y="1308" width="1.0" height="32" fill="#19264a"/>
<rect x="954.7" y="1308" width="1.0" height="32" fill="#19264a"/>
<rect x="956.4" y="1308" width="2.4" height="32" fill="#b2c04e"/>
<rect x="959.8" y="1308" width="16.3" height="32" fill="#a64374"/>
<rect x="977.8" y="1308" width="1195.2" height="32" fill="#a64374"/>
<rect x="1888.9" y="1308" width="1.0" height="32" fill="#19264a"/>
<rect x="1927.1" y="1308" width="1.0" height="32" fill="#19264a"/>
<rect x="1930.7" y="1308" width="1.0" height="32" fill="#19264a"/>
<text x="989.3" y="1331.9" class="fl flb">m</text><text x="1943.6" y="1331.9" class="fl flb">m</text>
<rect x="782.3" y="1342" width="2.2" height="32" fill="#a64374"/>
<rect x="799.0" y="1342" width="2.0" height="32" fill="#b2c04e"/>
<rect x="806.7" y="1342" width="1.0" height="32" fill="#a64374"/>
<rect x="809.3" y="1342" width="1.6" height="32" fill="#b2c04e"/>
<rect x="811.7" y="1342" width="143.9" height="32" fill="#b2c04e"/>
<rect x="844.7" y="1342" width="1.0" height="32" fill="#19264a"/>
<rect x="866.6" y="1342" width="1.0" height="32" fill="#19264a"/>
<rect x="869.5" y="1342" width="1.0" height="32" fill="#19264a"/>
<rect x="871.0" y="1342" width="1.0" height="32" fill="#19264a"/>
<rect x="881.0" y="1342" width="1.0" height="32" fill="#19264a"/>
<rect x="899.1" y="1342" width="1.0" height="32" fill="#19264a"/>
<rect x="901.2" y="1342" width="1.0" height="32" fill="#19264a"/>
<rect x="913.0" y="1342" width="1.0" height="32" fill="#19264a"/>
<rect x="928.8" y="1342" width="1.0" height="32" fill="#19264a"/>
<rect x="936.5" y="1342" width="1.0" height="32" fill="#19264a"/>
<rect x="954.7" y="1342" width="1.0" height="32" fill="#19264a"/>
<rect x="923.7" y="1342" width="1.0" height="32" fill="#19264a"/>
<rect x="941.2" y="1342" width="1.0" height="32" fill="#19264a"/>
<rect x="925.8" y="1342" width="2.9" height="32" fill="#a64374"/>
<rect x="956.4" y="1342" width="2.4" height="32" fill="#a64374"/>
<rect x="959.8" y="1342" width="16.3" height="32" fill="#b2c04e"/>
<rect x="977.8" y="1342" width="1195.2" height="32" fill="#b2c04e"/>
<rect x="1888.9" y="1342" width="1.0" height="32" fill="#19264a"/>
<rect x="1925.0" y="1342" width="1.0" height="32" fill="#19264a"/>
<rect x="1930.7" y="1342" width="1.0" height="32" fill="#19264a"/>
<rect x="1926.0" y="1342" width="1.3" height="32" fill="#a64374"/>
<text x="988.2" y="1365.9" class="fl flb">Xt</text><text x="1942" y="1365.9" class="fl flb">Xt</text>
<rect x="782.3" y="1376" width="2.2" height="32" fill="#a64374"/>
<rect x="800.0" y="1376" width="1.0" height="32" fill="#8c7021"/>
<rect x="805.5" y="1376" width="2.1" height="32" fill="#b2c04e"/>
<rect x="811.7" y="1376" width="87.9" height="32" fill="#a64374"/>
<rect x="844.7" y="1376" width="1.0" height="32" fill="#19264a"/>
<rect x="866.6" y="1376" width="1.0" height="32" fill="#19264a"/>
<rect x="869.5" y="1376" width="1.0" height="32" fill="#19264a"/>
<rect x="871.0" y="1376" width="1.0" height="32" fill="#19264a"/>
<rect x="881.0" y="1376" width="1.0" height="32" fill="#19264a"/>
<rect x="900.0" y="1376" width="55.6" height="32" fill="#4741bb"/>
<rect x="901.2" y="1376" width="1.0" height="32" fill="#19264a"/>
<rect x="913.0" y="1376" width="1.0" height="32" fill="#19264a"/>
<rect x="928.8" y="1376" width="1.0" height="32" fill="#19264a"/>
<rect x="936.5" y="1376" width="1.0" height="32" fill="#19264a"/>
<rect x="954.7" y="1376" width="1.0" height="32" fill="#19264a"/>
<rect x="923.7" y="1376" width="1.0" height="32" fill="#19264a"/>
<rect x="925.8" y="1376" width="2.9" height="32" fill="#b2c04e"/>
<rect x="942.3" y="1376" width="6.5" height="32" fill="#a64374"/>
<rect x="956.4" y="1376" width="2.4" height="32" fill="#b2c04e"/>
<rect x="959.8" y="1376" width="16.3" height="32" fill="#4741bb"/>
<rect x="977.8" y="1376" width="1195.2" height="32" fill="#4741bb"/>
<rect x="1888.9" y="1376" width="1.0" height="32" fill="#19264a"/>
<rect x="1927.1" y="1376" width="1.0" height="32" fill="#19264a"/>
<rect x="1930.7" y="1376" width="1.0" height="32" fill="#19264a"/>
<rect x="1926.0" y="1376" width="1.1" height="32" fill="#b2c04e"/>
<rect x="1932.3" y="1376" width="2.9" height="32" fill="#a64374"/>
<text x="989.3" y="1399.9" class="fl flb">m</text><text x="1947.5" y="1399.9" class="fl flb">m</text>
<rect x="782.3" y="1410" width="2.2" height="32" fill="#8c7021"/>
<rect x="800.0" y="1410" width="1.0" height="32" fill="#8c7021"/>
<rect x="805.5" y="1410" width="3.3" height="32" fill="#b2c04e"/>
<rect x="811.7" y="1410" width="143.9" height="32" fill="#4741bb"/>
<rect x="844.7" y="1410" width="1.0" height="32" fill="#19264a"/>
<rect x="866.6" y="1410" width="1.0" height="32" fill="#19264a"/>
<rect x="869.5" y="1410" width="1.0" height="32" fill="#19264a"/>
<rect x="871.0" y="1410" width="1.0" height="32" fill="#19264a"/>
<rect x="881.0" y="1410" width="1.0" height="32" fill="#19264a"/>
<rect x="899.1" y="1410" width="1.0" height="32" fill="#19264a"/>
<rect x="901.2" y="1410" width="1.0" height="32" fill="#19264a"/>
<rect x="913.0" y="1410" width="1.0" height="32" fill="#19264a"/>
<rect x="928.8" y="1410" width="1.0" height="32" fill="#19264a"/>
<rect x="936.5" y="1410" width="1.0" height="32" fill="#19264a"/>
<rect x="954.7" y="1410" width="1.0" height="32" fill="#19264a"/>
<rect x="890.3" y="1410" width="2.7" height="32" fill="#a64374"/>
<rect x="942.3" y="1410" width="6.5" height="32" fill="#b2c04e"/>
<rect x="956.4" y="1410" width="2.4" height="32" fill="#4741bb"/>
<rect x="959.8" y="1410" width="16.3" height="32" fill="#4741bb"/>
<rect x="977.8" y="1410" width="1195.2" height="32" fill="#4741bb"/>
<rect x="1888.9" y="1410" width="1.0" height="32" fill="#19264a"/>
<rect x="1925.0" y="1410" width="1.0" height="32" fill="#19264a"/>
<rect x="1927.1" y="1410" width="1.0" height="32" fill="#19264a"/>
<rect x="1932.3" y="1410" width="2.9" height="32" fill="#b2c04e"/>
<text x="989.3" y="1433.9" class="fl flb">m</text><text x="1947.5" y="1433.9" class="fl flb">m</text>
<rect x="782.3" y="1444" width="2.2" height="2" fill="#a64374"/>
<rect x="811.7" y="1444" width="56" height="2" fill="#b2c04e"/><rect x="868" y="1444" width="31" height="2" fill="#b2c04e"/>
<rect x="900" y="1444" width="55" height="2" fill="#a64374"/><rect x="960" y="1444" width="1213" height="2" fill="#a64374"/>
<rect x="1890" y="1444" width="4" height="2" fill="#775bee"/><rect x="1894" y="1444" width="15" height="2" fill="#e00000"/>
<rect x="844.7" y="1444" width="1" height="2" fill="#19264a"/>
<rect x="866.6" y="1444" width="1" height="2" fill="#19264a"/>
<rect x="869.5" y="1444" width="1" height="2" fill="#19264a"/>
<rect x="871.0" y="1444" width="1" height="2" fill="#19264a"/>
<rect x="881.0" y="1444" width="1" height="2" fill="#19264a"/>
<rect x="899.1" y="1444" width="1" height="2" fill="#19264a"/>
<rect x="901.2" y="1444" width="1" height="2" fill="#19264a"/>
<rect x="913.0" y="1444" width="1" height="2" fill="#19264a"/>
<rect x="928.8" y="1444" width="1" height="2" fill="#19264a"/>
<rect x="936.5" y="1444" width="1" height="2" fill="#19264a"/>
<rect x="954.7" y="1444" width="1" height="2" fill="#19264a"/>
<rect x="1820.5" y="1444" width="1" height="2" fill="#19264a"/>
<rect x="1858.5" y="1444" width="1" height="2" fill="#19264a"/>
<rect x="1888.9" y="1444" width="1" height="2" fill="#19264a"/>
<rect x="1909.0" y="1444" width="1" height="2" fill="#19264a"/>
<rect x="1922.5" y="1444" width="1" height="2" fill="#19264a"/>
<rect x="1927.1" y="1444" width="1" height="2" fill="#19264a"/>
<rect x="1930.7" y="1444" width="1" height="2" fill="#19264a"/>
<rect x="2174.0" y="1104" width="183.4" height="32" fill="#b07a45"/>
<text x="2184.6" y="1127.9" class="fl flb">(anonymous)</text>
<rect x="2359.7" y="1104" width="139.5" height="32" fill="#b2c04e"/>
<text x="2370.6" y="1127.9" class="fl flb">(ano…ous)</text>
<rect x="2500.2" y="1104" width="21.0" height="32" fill="#b2c04e"/>
<rect x="2174.0" y="1138" width="183.4" height="32" fill="#b07a45"/>
<text x="2184.6" y="1161.9" class="fl flb">Qe</text>
<rect x="2359.7" y="1138" width="139.5" height="32" fill="#b2c04e"/>
<text x="2370.6" y="1161.9" class="fl flb">ft</text>
<rect x="2499.7" y="1138" width="1.0" height="32" fill="#a64374"/>
<rect x="2501.9" y="1138" width="19.3" height="32" fill="#a64374"/>
<rect x="2174.0" y="1172" width="183.4" height="32" fill="#775bee"/>
<text x="2184.6" y="1195.9" class="fl flb">Layout</text>
<path d="M2341.5,1172 H2357.4 V1187.5 Z" fill="#e0000c"/>
<rect x="2359.7" y="1172" width="139.5" height="32" fill="#a64374"/>
<text x="2370.6" y="1195.9" class="fl flb">(ano…ous)</text>
<rect x="2499.7" y="1172" width="1.0" height="32" fill="#8c7021"/>
<rect x="2501.9" y="1172" width="17.3" height="32" fill="#775bee"/>
<path d="M2502.5,1172 H2519.2 V1187.5 Z" fill="#e0000c"/>
<rect x="2520.0" y="1172" width="1.2" height="32" fill="#775bee"/>
<rect x="2522.1" y="1172" width="1.0" height="32" fill="#8c7021"/>
<rect x="2359.7" y="1206" width="139.5" height="32" fill="#a64374"/>
<text x="2370.6" y="1229.9" class="fl flb">d</text>
<rect x="2499.7" y="1206" width="1.0" height="32" fill="#8c7021"/>
<rect x="2359.7" y="1240" width="10.9" height="32" fill="#8c7021"/>
<rect x="2371.8" y="1240" width="21.0" height="32" fill="#8c7021"/>
<rect x="2394.0" y="1240" width="12.8" height="32" fill="#8c7021"/>
<rect x="2408.0" y="1240" width="29.2" height="32" fill="#8c7021"/>
<rect x="2439.5" y="1240" width="17.5" height="32" fill="#8c7021"/>
<rect x="2459.4" y="1240" width="37.8" height="32" fill="#8c7021"/>
<rect x="2498.1" y="1240" width="1.0" height="32" fill="#8c7021"/>
<rect x="2499.8" y="1240" width="1.0" height="32" fill="#8c7021"/>
<rect x="2408.0" y="1274" width="29.2" height="32" fill="#8c7021"/>
<rect x="2459.7" y="1274" width="37.5" height="32" fill="#8c7021"/>
<rect x="2530.0" y="1002" width="41.4" height="32" fill="#696969"/>
<rect x="2572.1" y="1002" width="0.9" height="32" fill="#696969"/>
<rect x="2574.2" y="1002" width="0.9" height="32" fill="#696969"/>
<rect x="2576.1" y="1002" width="0.9" height="32" fill="#696969"/>
<rect x="2578.5" y="1002" width="148.8" height="32" fill="#696969"/>
<text x="2588.7" y="1025.9" class="fl flb">Task</text>
<rect x="2630.6" y="1002" width="96.7" height="32" fill="url(#lt)"/>
<path d="M2711.5,1002 H2727.3 V1017.5 Z" fill="#e00000"/>
<rect x="2728.1" y="1002" width="2.6" height="32" fill="#696969"/>
<rect x="2731.8" y="1002" width="1.2" height="32" fill="#696969"/>
<rect x="2733.9" y="1002" width="1.1" height="32" fill="#696969"/>
<rect x="2821.3" y="1002" width="1.3" height="32" fill="#6a6c76"/>
<rect x="2833.9" y="1002" width="1.3" height="32" fill="#6a6c76"/>
<rect x="2530.1" y="1036" width="1.0" height="32" fill="#8c7021"/>
<rect x="2532.0" y="1036" width="25.1" height="32" fill="#775bee"/>
<rect x="2558.0" y="1036" width="1.0" height="32" fill="#6a8f4a"/>
<rect x="2560.0" y="1036" width="11.1" height="32" fill="#6a8f4a"/>
<rect x="2572.0" y="1036" width="1.0" height="32" fill="#775bee"/>
<rect x="2574.1" y="1036" width="1.0" height="32" fill="#775bee"/>
<rect x="2577.9" y="1036" width="1.1" height="32" fill="#775bee"/>
<rect x="2727.8" y="1036" width="1.3" height="32" fill="#775bee"/>
<rect x="2529.8" y="1070" width="1.0" height="32" fill="#8c7021"/>
<rect x="2531.8" y="1070" width="1.0" height="32" fill="#8c7021"/>
<rect x="2558.1" y="1070" width="1.0" height="32" fill="#6a8f4a"/>
<rect x="2560.1" y="1070" width="1.0" height="32" fill="#6a8f4a"/>
<rect x="2569.7" y="1070" width="1.2" height="32" fill="#775bee"/>
<rect x="165.8" y="668" width="2.2" height="778" fill="#fff" opacity=".1"/>
<rect x="375.9" y="668" width="2.2" height="778" fill="#fff" opacity=".1"/>
<rect x="586.1" y="668" width="2.2" height="778" fill="#fff" opacity=".1"/>
<rect x="796.2" y="668" width="2.2" height="778" fill="#fff" opacity=".1"/>
<rect x="1006.4" y="668" width="2.2" height="778" fill="#fff" opacity=".1"/>
<rect x="1216.5" y="668" width="2.2" height="778" fill="#fff" opacity=".1"/>
<rect x="1426.6" y="668" width="2.2" height="778" fill="#fff" opacity=".1"/>
<rect x="1636.8" y="668" width="2.2" height="778" fill="#fff" opacity=".1"/>
<rect x="1846.9" y="668" width="2.2" height="778" fill="#fff" opacity=".1"/>
<rect x="2057.1" y="668" width="2.2" height="778" fill="#fff" opacity=".1"/>
<rect x="2267.2" y="668" width="2.2" height="778" fill="#fff" opacity=".1"/>
<rect x="2477.3" y="668" width="2.2" height="778" fill="#fff" opacity=".1"/>
<rect x="2687.5" y="668" width="2.2" height="778" fill="#fff" opacity=".1"/>
<rect x="0" y="739.700" width="2858" height="34.600" fill="#fff"/>
<rect x="0" y="739.700" width="2" height="34.600" fill="#d3ecc4"/>
<rect x="6.3" y="744.300" width="112.600" height="25.300" fill="#4d4d50"/>
<text x="37" y="764" class="fl" style="color:#ececec">Frames</text>
<rect x="2551.5" y="772.3" width="1.500" height="1.800" fill="#222"/>
<text x="156.6" y="692" text-anchor="end" class="fl" style="color:#e6e6e6">1200 ms</text>
<text x="366.7" y="692" text-anchor="end" class="fl" style="color:#e6e6e6">1400 ms</text>
<text x="576.9" y="692" text-anchor="end" class="fl" style="color:#e6e6e6">1600 ms</text>
<text x="787.0" y="692" text-anchor="end" class="fl" style="color:#e6e6e6">1800 ms</text>
<text x="997.2" y="692" text-anchor="end" class="fl" style="color:#e6e6e6">2000 ms</text>
<text x="1207.3" y="692" text-anchor="end" class="fl" style="color:#e6e6e6">2200 ms</text>
<text x="1417.4" y="692" text-anchor="end" class="fl" style="color:#e6e6e6">2400 ms</text>
<text x="1627.6" y="692" text-anchor="end" class="fl" style="color:#e6e6e6">2600 ms</text>
<text x="1837.7" y="692" text-anchor="end" class="fl" style="color:#e6e6e6">2800 ms</text>
<text x="2047.9" y="692" text-anchor="end" class="fl" style="color:#e6e6e6">3000 ms</text>
<text x="2258.0" y="692" text-anchor="end" class="fl" style="color:#e6e6e6">3200 ms</text>
<text x="2468.1" y="692" text-anchor="end" class="fl" style="color:#e6e6e6">3400 ms</text>
<text x="2678.3" y="692" text-anchor="end" class="fl" style="color:#e6e6e6">3600 ms</text>
<text x="2888.4" y="692" text-anchor="end" class="fl" style="color:#e6e6e6">3800 ms</text>
<rect x="0" y="964" width="20" height="4" fill="#4468c8"/><rect x="0" y="964" width="4" height="482" fill="#4468c8"/>
</g>
<rect x="2858" y="668" width="22" height="778" fill="#282828"/>
<rect x="2860.8" y="673" width="15.2" height="45" rx="7.6" fill="#333"/>
<rect x="2860.8" y="741.4" width="15.2" height="233.8" rx="7.6" fill="#333"/>
<defs><linearGradient id="tsh" x1="0" y1="0" x2="0" y2="1"><stop offset="0" stop-color="#000" stop-opacity=".32"/><stop offset="1" stop-color="#000" stop-opacity="0"/></linearGradient></defs>
<rect x="1108" y="1079" width="579" height="8" fill="url(#tsh)"/>
<rect x="1685" y="1036" width="3" height="44" fill="#000" opacity=".18"/>
<rect x="1107" y="1031" width="577" height="47.200" fill="none" stroke="#fff" stroke-opacity=".38" stroke-width="2"/>
<rect x="1108" y="1032" width="575" height="45.200" fill="#24252a"/>
<text x="1125.5" y="1063" font-family="Liberation Sans, sans-serif" font-size="24" fill="#93d09e" stroke="#93d09e" stroke-width=".3" textLength="212" lengthAdjust="spacingAndGlyphs">1.67 s (self 7.48 ms)</text>
<text x="1348" y="1063" font-family="Liberation Sans, sans-serif" font-size="24" fill="#f6f6f6" stroke="#f6f6f6" stroke-width=".3">Task</text>
<text x="1407.5" y="1063" font-family="Liberation Sans, sans-serif" font-size="24" fill="#e8918b" stroke="#e8918b" stroke-width=".3" textLength="237.5" lengthAdjust="spacingAndGlyphs">Long task took 1.67 s.</text>
</svg>
<div class="a" style="left:0px;top:1446px;width:2880px;height:2px;background:#4c4d52;"></div>
<div class="a" style="left:0px;top:1448px;width:2880px;height:65px;background:#363636;"></div>
<div class="a" style="left:0px;top:1513px;width:2880px;height:57px;background:#3c3c3c;"></div>
<div class="a" style="left:0px;top:1570px;width:2880px;height:2.5px;background:#4c4d52;"></div>
<div class="a" style="left:0px;top:1572.5px;width:2880px;height:7.5px;background:#2c2d32;"></div>
<div class="a" style="left:6px;top:1452px;width:142px;height:57.5px;background:#000;border-radius:7px 7px 0 0;border-bottom:3px solid #4a78d6"></div>
<div class="t tab" style="left:25.2px;top:1469.0px;font-size:24px;color:#f0f0f0">Summary</div>
<div class="t tab" style="left:167.7px;top:1469.0px;font-size:24px;letter-spacing:.55px">Bottom-Up</div>
<div class="t tab" style="left:327.6px;top:1469.0px;font-size:24px;letter-spacing:-.5px">Call Tree</div>
<div class="t tab" style="left:459.8px;top:1469.0px;font-size:24px;">Event Log</div>
<div class="t ui" style="left:16.8px;top:1530.7px;font-size:26px;color:#f0f0f0">Range: 1.04 s - 3.76 s</div>
</body></html>
